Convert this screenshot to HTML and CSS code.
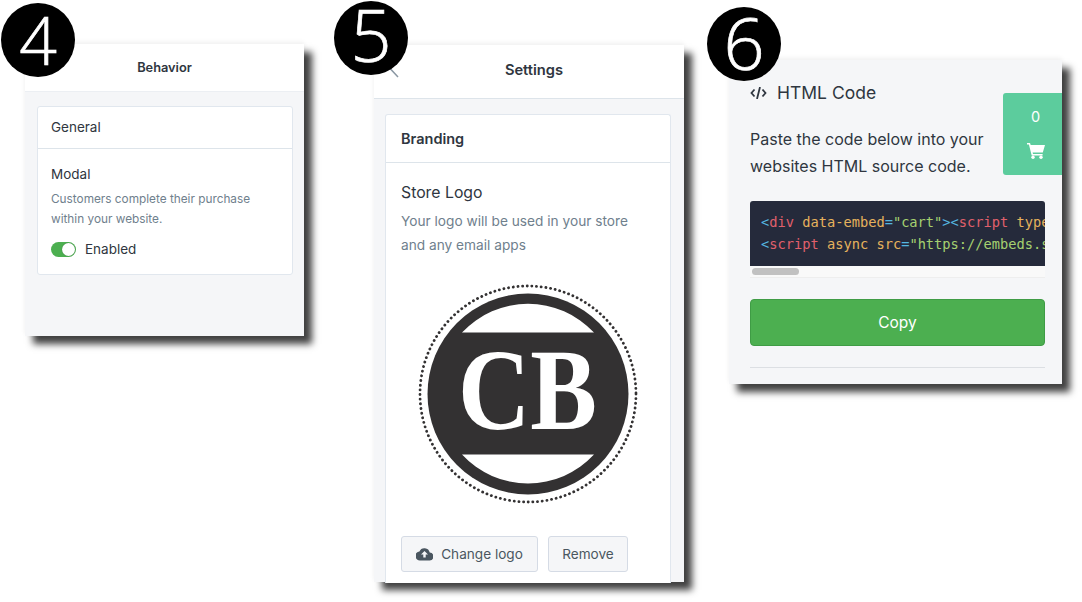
FILE: index.html
```html
<!DOCTYPE html>
<html lang="en">
<head>
    <meta charset="UTF-8">
    <meta name="viewport" content="width=device-width, initial-scale=1.0">
    <title>Embed steps</title>
    <link rel="stylesheet" href="styles.css">
</head>
<body>
<div class="stage">

    <section class="panel panel4">
        <div class="step step4">4</div>
        <header class="top top4">Behavior</header>
        <div class="card card4">
            <div class="card-head">General</div>
            <div class="card-body">
                <div class="item-title">Modal</div>
                <p class="item-text">Customers complete their purchase<br>within your website.</p>
                <div class="toggle-row">
                    <span class="toggle"><span class="knob"></span></span>
                    <span>Enabled</span>
                </div>
            </div>
        </div>
    </section>

    <section class="panel panel5">
        <div class="step step5">5</div>
        <header class="top top5">
            <svg class="back" width="20" height="26" viewBox="0 0 20 26"><path d="M16 0 3 10l13 14" fill="none" stroke="#8a97a3" stroke-width="1.5"/></svg>
            Settings
        </header>
        <div class="card card5">
            <div class="card-head">Branding</div>
            <div class="card-body">
                <div class="logo-title">Store Logo</div>
                <p class="logo-text">Your logo will be used in your store<br>and any email apps</p>
                <svg class="logo" width="222" height="222" viewBox="0 0 222 222">
                    <circle cx="111" cy="111" r="108" fill="none" stroke="#333132" stroke-width="2.8" stroke-linecap="round" stroke-dasharray="0.1 4.6"/>
                    <circle cx="111" cy="111" r="100.5" fill="#333132"/>
                    <path d="M45 49.6a90 90 0 0 1 132 0zM45 171.6a90 90 0 0 0 132 0z" fill="#fff"/>
                    <text class="logo-letters" x="41" y="146" textLength="139" lengthAdjust="spacingAndGlyphs">CB</text>
                </svg>
                <div class="logo-btns">
                    <button class="btn btn-change">
                        <svg width="17" height="14" viewBox="0 0 17 14"><path d="M13.7 5.6A5.4 5.4 0 0 0 3.4 4.5 4.4 4.4 0 0 0 4.3 13.4h8.9a3.9 3.9 0 0 0 .5-7.8z" fill="#4a5660"/><path d="M8.5 4 5 7.6h2.3v3h2.4v-3H12z" fill="#f5f6f8"/></svg>
                        Change logo
                    </button>
                    <button class="btn btn-remove">Remove</button>
                </div>
            </div>
        </div>
    </section>

    <section class="panel panel6">
        <div class="step step6">6</div>
        <div class="cart-tab">
            <span>0</span>
            <svg width="18" height="17" viewBox="0 0 18 17"><path d="M0 1h3l.7 2H18l-2.2 7.500H5.600l.4 1.500h9.600v1.600H4.700L1.900 2.600H0z" fill="#fff"/><circle cx="6" cy="15.300" r="1.700" fill="#fff"/><circle cx="14" cy="15.300" r="1.700" fill="#fff"/></svg>
        </div>
        <h3 class="code-title">
            <svg width="17" height="12" viewBox="0 0 17 12"><path d="M4.500 2.500 1.500 6l3 3.500M12.500 2.500l3 3.500-3 3.500M10 0 7 12" fill="none" stroke="#2f3640" stroke-width="1.800"/></svg>
            HTML Code
        </h3>
        <p class="code-text">Paste the code below into your<br>websites HTML source code.</p>
        <div class="code-box">
<pre class="code"><span class="p">&lt;</span><span class="t">div</span> <span class="a">data-embed</span><span class="p">=</span><span class="s">"cart"</span><span class="p">&gt;&lt;</span><span class="t">script</span> <span class="a">type=</span>
<span class="p">&lt;</span><span class="t">script</span> <span class="a">async</span> <span class="a">src</span><span class="p">=</span><span class="s">"https://embeds.s</span></pre>
            <div class="scroll"><span class="thumb"></span></div>
        </div>
        <button class="copy">Copy</button>
        <hr class="rule">
    </section>

</div>
</body>
</html>
```

FILE: styles.css
```css
* {
    box-sizing: border-box;
}
html, body {
    margin: 0;
    height: 602px;
    overflow: hidden;
    background: #ffffff;
}
body {
    font-family: Inter, Lato, sans-serif;
    color: #2f3640;
}
.stage {
    display: flex;
    align-items: flex-start;
    padding-left: 25px;
}
.panel {
    position: relative;
    background: #f5f6f8;
    box-shadow: 8px 8px 7px rgba(0, 0, 0, 0.75), 0 -2px 5px rgba(0, 0, 0, 0.06);
}
.panel4 {
    width: 279px;
    height: 292px;
    margin-top: 44px;
}
.panel5 {
    width: 310px;
    height: 537px;
    margin-top: 45px;
    margin-left: 70px;
}
.panel6 {
    width: 333px;
    height: 324px;
    margin-top: 60px;
    margin-left: 45px;
    padding: 21px 17px 0 21px;
}

/* step numbers */
.step {
    position: absolute;
    width: 74px;
    height: 74px;
    border-radius: 50%;
    background: #000000;
    color: #ffffff;
    font-family: "Open Sans", sans-serif;
    font-weight: 300;
    -webkit-text-stroke: 0.7px #ffffff;
    text-align: center;
    z-index: 2;
}
.step4 { left: -24px; top: -41px; font-size: 66px; line-height: 72px; }
.step5 { left: -40px; top: -44px; font-size: 72px; line-height: 67px; }
.step6 { left: -22px; top: -53px; font-size: 72px; line-height: 71px; }

.top {
    background: #ffffff;
    text-align: center;
    font-weight: 600;
    border-bottom: 1px solid #eceff3;
}
.top4 {
    height: 48px;
    line-height: 48px;
    font-size: 12.8px;
}
.top5 {
    position: relative;
    height: 54px;
    padding-left: 10px;
    line-height: 50px;
    font-size: 14.7px;
    border-bottom-color: #dde4ea;
}
.back {
    position: absolute;
    left: 8px;
    top: 8px;
}

.card {
    background: #ffffff;
    border: 1px solid #e1e7ee;
    border-radius: 3px;
}
.card-head {
    border-bottom: 1px solid #dde4ea;
}
.card4 {
    margin: 14px 11px 0 12px;
    height: 169px;
}
.card4 .card-head {
    height: 42px;
    line-height: 40px;
    padding-left: 13px;
    font-size: 13.5px;
}
.card4 .card-body {
    padding: 15px 13px 0;
}
.item-title {
    font-size: 13.5px;
    line-height: 20px;
}
.item-text {
    margin: 5px 0 0;
    font-size: 11.8px;
    line-height: 20px;
    color: #6f808d;
}
.toggle-row {
    display: flex;
    align-items: center;
    gap: 9px;
    margin-top: 12px;
    font-size: 13.5px;
}
.toggle {
    display: flex;
    justify-content: flex-end;
    align-items: center;
    width: 25px;
    height: 15px;
    padding-right: 1px;
    border-radius: 8px;
    background: #4caf50;
}
.knob {
    width: 13px;
    height: 13px;
    border-radius: 50%;
    background: #ffffff;
    box-shadow: 0 0 1px rgba(0, 0, 0, 0.4);
}

.card5 {
    margin: 15px 13px 0 11px;
    height: 469px;
    border-bottom: 0;
    border-radius: 3px 3px 0 0;
}
.card5 .card-head {
    height: 48px;
    line-height: 47px;
    padding-left: 15px;
    font-size: 14.5px;
    font-weight: 600;
}
.card5 .card-body {
    padding: 19px 15px 0;
}
.logo-title {
    font-size: 15.8px;
    line-height: 22px;
}
.logo-text {
    margin: 5px 0 0;
    font-size: 13.7px;
    line-height: 24px;
    color: #6f808d;
}
.logo {
    display: block;
    margin: 26px 0 0 16px;
}
.logo-letters {
    font-family: "Liberation Serif", serif;
    font-weight: 700;
    font-size: 116px;
    fill: #ffffff;
}
.logo-btns {
    display: flex;
    gap: 10px;
    margin-top: 31px;
}
.btn {
    display: flex;
    align-items: center;
    justify-content: center;
    gap: 8px;
    height: 36px;
    padding: 0;
    background: #f5f6f8;
    border: 1px solid #d5dbe5;
    border-radius: 3px;
    font-family: inherit;
    font-size: 13.6px;
    color: #4a5660;
}
.btn-change { width: 137px; }
.btn-remove { width: 80px; }

.cart-tab {
    position: absolute;
    right: 0;
    top: 33px;
    display: flex;
    flex-direction: column;
    align-items: center;
    gap: 16px;
    width: 59px;
    height: 82px;
    padding: 15px 0 0 6px;
    background: #5ccc9d;
    border-radius: 3px 0 0 3px;
    color: #ffffff;
    font-size: 14.5px;
    line-height: 18px;
}
.code-title {
    display: flex;
    align-items: center;
    gap: 10px;
    margin: 0;
    font-size: 17.5px;
    font-weight: 400;
    line-height: 24px;
}
.code-text {
    margin: 21px 0 0;
    font-size: 16px;
    line-height: 27px;
}
.code-box {
    width: 295px;
    margin-top: 21px;
    overflow: hidden;
}
.code {
    margin: 0;
    height: 65px;
    padding: 10px 0 0 11px;
    overflow: hidden;
    background: #252a3b;
    border-radius: 3px 3px 0 0;
    font-family: "DejaVu Sans Mono", monospace;
    font-size: 13.7px;
    line-height: 22px;
    color: #d6dbe5;
}
.p { color: #56b6e0; }
.t { color: #e0606c; }
.a { color: #e5b25d; }
.s { color: #a5d170; }
.scroll {
    height: 12px;
    padding: 2px;
    background: #f9f9f9;
    border-bottom: 1px solid #eeeeee;
}
.thumb {
    display: block;
    width: 47px;
    height: 7px;
    border-radius: 4px;
    background: #c1c1c1;
}
.copy {
    display: block;
    width: 295px;
    height: 47px;
    margin-top: 21px;
    background: #4caf50;
    border: 1px solid #3f9c45;
    border-radius: 4px;
    font-family: inherit;
    font-size: 15.5px;
    color: #ffffff;
}
.rule {
    margin: 21px 0 0;
    border: 0;
    border-top: 1px solid #dcdfe3;
}
```
